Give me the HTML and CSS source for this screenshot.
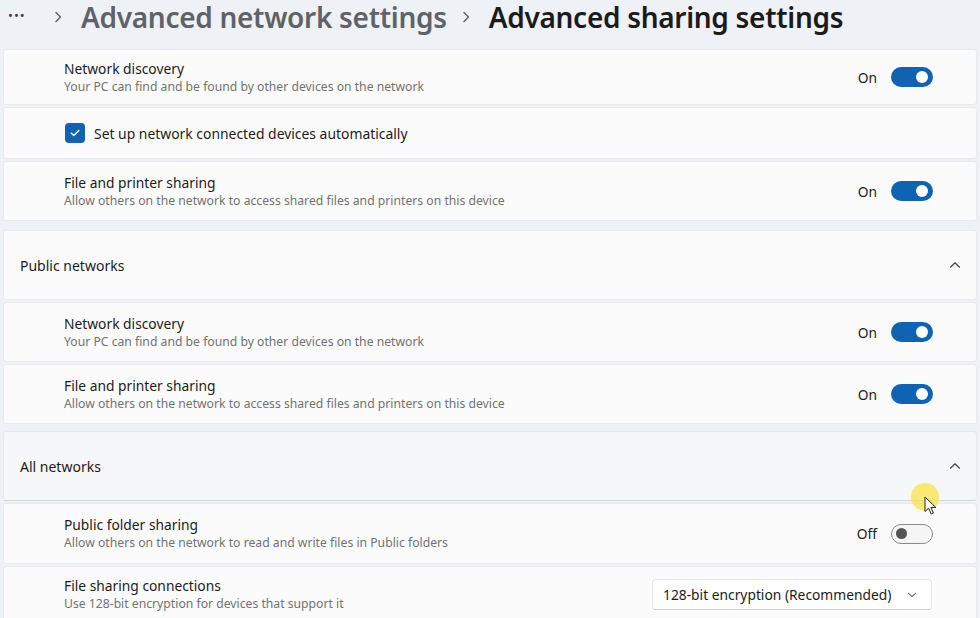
FILE: index.html
```html
<!DOCTYPE html>
<html lang="en">
<head>
<meta charset="utf-8">
<title>Advanced sharing settings</title>
<link rel="stylesheet" href="styles.css">
</head>
<body>
<div class="page">
  <div class="breadcrumb">
    <span class="dots">•••</span>
    <svg class="sep" width="10" height="14" viewBox="0 0 10 14"><path d="M3 2.5 L7.5 7 L3 11.5" fill="none" stroke="#5f6368" stroke-width="1.5" stroke-linecap="round" stroke-linejoin="round"/></svg>
    <span class="crumb">Advanced network settings</span>
    <svg class="sep" width="10" height="14" viewBox="0 0 10 14"><path d="M3 2.5 L7.5 7 L3 11.5" fill="none" stroke="#5f6368" stroke-width="1.5" stroke-linecap="round" stroke-linejoin="round"/></svg>
    <span class="crumb current">Advanced sharing settings</span>
  </div>

  <div class="group group-first">
    <div class="row h56">
      <div class="texts">
        <div class="title">Network discovery</div>
        <div class="desc">Your PC can find and be found by other devices on the network</div>
      </div>
      <div class="state">On</div>
      <div class="toggle on"><span class="knob"></span></div>
    </div>
    <div class="row h52">
      <span class="checkbox"><svg width="12" height="12" viewBox="0 0 12 12"><path d="M2.3 6.3 L4.8 8.6 L9.8 3.4" fill="none" stroke="#fff" stroke-width="1.4" stroke-linecap="round" stroke-linejoin="round"/></svg></span>
      <span class="check-label">Set up network connected devices automatically</span>
    </div>
    <div class="row h60">
      <div class="texts">
        <div class="title">File and printer sharing</div>
        <div class="desc">Allow others on the network to access shared files and printers on this device</div>
      </div>
      <div class="state">On</div>
      <div class="toggle on"><span class="knob"></span></div>
    </div>
  </div>

  <div class="group group-public">
    <div class="header">
      <span class="header-text">Public networks</span>
      <svg class="chev" width="12" height="8" viewBox="0 0 12 8"><path d="M1.5 6.2 L6 1.8 L10.5 6.2" fill="none" stroke="#444" stroke-width="1.2" stroke-linecap="round" stroke-linejoin="round"/></svg>
    </div>
    <div class="row h60">
      <div class="texts">
        <div class="title">Network discovery</div>
        <div class="desc">Your PC can find and be found by other devices on the network</div>
      </div>
      <div class="state">On</div>
      <div class="toggle on"><span class="knob"></span></div>
    </div>
    <div class="row h60">
      <div class="texts">
        <div class="title">File and printer sharing</div>
        <div class="desc">Allow others on the network to access shared files and printers on this device</div>
      </div>
      <div class="state">On</div>
      <div class="toggle on"><span class="knob"></span></div>
    </div>
  </div>

  <div class="group group-all">
    <div class="header header-hover">
      <span class="header-text">All networks</span>
      <svg class="chev" width="12" height="8" viewBox="0 0 12 8"><path d="M1.5 6.2 L6 1.8 L10.5 6.2" fill="none" stroke="#444" stroke-width="1.2" stroke-linecap="round" stroke-linejoin="round"/></svg>
    </div>
    <div class="row h61">
      <div class="texts">
        <div class="title">Public folder sharing</div>
        <div class="desc">Allow others on the network to read and write files in Public folders</div>
      </div>
      <div class="state">Off</div>
      <div class="toggle off"><span class="knob"></span></div>
    </div>
    <div class="row h61 file-conn">
      <div class="texts">
        <div class="title">File sharing connections</div>
        <div class="desc">Use 128-bit encryption for devices that support it</div>
      </div>
      <div class="dropdown">
        <span>128-bit encryption (Recommended)</span>
        <svg width="10" height="6" viewBox="0 0 10 6"><path d="M1.5 1.3 L5 4.6 L8.5 1.3" fill="none" stroke="#666" stroke-width="1.1" stroke-linecap="round" stroke-linejoin="round"/></svg>
      </div>
    </div>
  </div>

  <div class="cursor">
    <span class="halo"></span>
    <svg class="arrow" width="14" height="20" viewBox="0 0 14 20"><path d="M1 1 L1 15.5 L4.6 12.2 L7.2 18 L9.4 17 L6.9 11.4 L11.8 11.4 Z" fill="#fff" stroke="#222" stroke-width="1" stroke-linejoin="round"/></svg>
  </div>
</div>
</body>
</html>
```

FILE: styles.css
```css
html, body {
  margin: 0;
  padding: 0;
  background: #eef1f5;
  font-family: "Noto Sans", "Open Sans", sans-serif;
  color: #1b1b1b;
  overflow: hidden;
}

.page {
  position: relative;
  width: 980px;
  height: 618px;
  padding: 0 3px;
  box-sizing: border-box;
}

.breadcrumb {
  height: 49px;
  display: flex;
  align-items: flex-start;
  padding-left: 5px;
}

.dots {
  font-size: 13px;
  letter-spacing: 1px;
  color: #444;
  margin-top: 6px;
  width: 45px;
}

.sep {
  margin-top: 10px;
  margin-right: 18px;
}

.crumb {
  font-size: 28px;
  font-weight: 600;
  color: #5f6368;
  line-height: 36px;
  margin-top: -1px;
  margin-right: 14px;
  letter-spacing: -0.3px;
}

.crumb.current {
  color: #1b1b1b;
}

.group {
  display: flex;
  flex-direction: column;
  gap: 2px;
  width: 974px;
}

.group-first {
  margin-bottom: 9px;
}

.group-public {
  margin-bottom: 7px;
}

.row, .header {
  background: #fbfbfc;
  display: flex;
  align-items: center;
  padding: 0 43px 0 60px;
  box-sizing: border-box;
  border: 1px solid #e8eaed;
  border-radius: 3px;
}

.h56 { height: 56px; }
.h52 { height: 52px; }
.h60 { height: 60px; }
.h61 { height: 61px; }

.header {
  height: 70px;
  padding: 0 15px 0 16px;
}

.header-hover {
  background: #f6f7f9;
  border-bottom: 1px solid #d3d6da;
}

.header-text {
  font-size: 14px;
  flex: 1;
  color: #1b1b1b;
}

.texts {
  flex: 1;
  display: flex;
  flex-direction: column;
}

.title {
  font-size: 13.8px;
  line-height: 18px;
  color: #1b1b1b;
}

.desc {
  font-size: 12.2px;
  line-height: 17px;
  color: #727272;
}

.state {
  font-size: 13.8px;
  color: #1b1b1b;
  margin-right: 14px;
}

.toggle {
  width: 42px;
  height: 20px;
  border-radius: 10px;
  box-sizing: border-box;
  display: flex;
  align-items: center;
}

.toggle.on {
  background: #0f63b5;
  justify-content: flex-end;
  padding-right: 5px;
}

.toggle.on .knob {
  width: 12px;
  height: 12px;
  border-radius: 50%;
  background: #fff;
}

.toggle.off {
  background: #f5f5f5;
  border: 1px solid #8a8a8a;
  justify-content: flex-start;
  padding-left: 4px;
}

.toggle.off .knob {
  width: 11px;
  height: 11px;
  border-radius: 50%;
  background: #555;
}

.checkbox {
  width: 20px;
  height: 20px;
  border-radius: 4px;
  background: #0f63b5;
  display: flex;
  align-items: center;
  justify-content: center;
  margin-left: 1px;
  margin-right: 9px;
}

.check-label {
  font-size: 13.9px;
  color: #1b1b1b;
}

.file-conn {
  align-items: flex-start;
  padding-top: 10px;
}

.dropdown {
  width: 280px;
  height: 31px;
  box-sizing: border-box;
  background: #fff;
  border: 1px solid #e4e5e7;
  border-bottom-color: #d0d1d3;
  border-radius: 4px;
  display: flex;
  align-items: center;
  justify-content: space-between;
  padding: 0 14px 0 10px;
  font-size: 13.8px;
  color: #1b1b1b;
  margin-top: 2px;
  margin-right: 1px;
}

.cursor {
  position: absolute;
  left: 911px;
  top: 483px;
  width: 28px;
  height: 28px;
}

.halo {
  position: absolute;
  left: 0;
  top: 0;
  width: 28px;
  height: 28px;
  border-radius: 50%;
  background: rgba(250, 225, 60, 0.7);
}

.arrow {
  position: absolute;
  left: 13px;
  top: 13px;
}
```
